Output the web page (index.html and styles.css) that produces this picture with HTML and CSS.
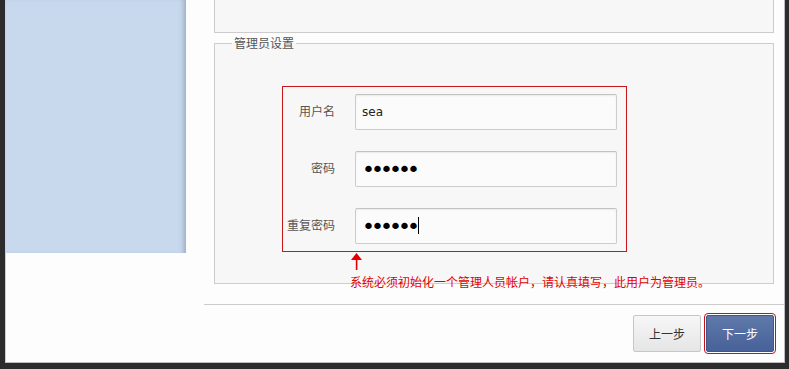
FILE: index.html
```html
<!DOCTYPE html>
<html lang="zh-CN">
<head>
<meta charset="UTF-8">
<meta name="viewport" content="width=device-width, initial-scale=1.0">
<link rel="stylesheet" href="styles.css">
</head>
<body>

<div class="frame">
  <aside class="sidebar"></aside>
  <main class="main">
    <div class="panel panel-top"></div>

    <fieldset class="panel admin">
      <legend>管理员设置</legend>
      <div class="account">
        <div class="row">
          <label for="username">用户名</label>
          <input type="text" id="username" value="sea">
        </div>
        <div class="row">
          <label for="password">密码</label>
          <input type="password" id="password" class="pass" value="123456">
        </div>
        <div class="row">
          <label for="password2">重复密码</label>
          <input type="password" id="password2" class="pass" value="123456">
          <span class="caret"></span>
        </div>
        <div class="hint">
          <svg class="arrow" width="11" height="17" viewBox="0 0 11 17">
            <polygon points="5.5,0 11,7 0,7" fill="#e00000"/>
            <rect x="4.8" y="7" width="1.6" height="10" fill="#e00000"/>
          </svg>
          <p>系统必须初始化一个管理人员帐户，请认真填写，此用户为管理员。</p>
        </div>
      </div>
    </fieldset>

    <div class="actions">
      <button class="btn">上一步</button>
      <button class="btn btn-primary">下一步</button>
    </div>
  </main>
</div>

</body>
</html>
```

FILE: styles.css
```css
html, body {
  height: 100%;
}
body {
  margin: 0;
  padding: 0 4px 6px 5px;
  box-sizing: border-box;
  background: #2c2c2c;
  font-family: "Noto Sans CJK SC", "DejaVu Sans", sans-serif;
  font-size: 12px;
  color: #555;
}
.frame {
  display: flex;
  height: 100%;
  box-sizing: border-box;
  background: #fdfdfd;
  border-left: 1px solid #cfcfcf;
  border-right: 1px solid #bdbdbd;
  border-bottom: 1px solid #bdbdbd;
}
.sidebar {
  width: 180px;
  height: 253px;
  flex-shrink: 0;
  background: #c8d9ee;
  box-shadow: inset -5px 0 5px -3px rgba(60, 80, 110, 0.35);
}
.main {
  flex: 1;
  padding-left: 18px;
  display: flex;
  flex-direction: column;
}
.panel {
  margin: 0 10px;
  border: 1px solid #cccccc;
  background: #f7f7f7;
}
.panel-top {
  height: 32px;
  border-top: 0;
}
.admin {
  margin-top: 3px;
  padding: 36px 0 31px 17px;
  min-width: 0;
}
.admin legend {
  padding: 0 2px;
  line-height: 14px;
  color: #555;
}
.account {
  position: relative;
  margin-left: 50px;
  width: 334px;
  padding: 7px 9px 7px 0;
  border: 1px solid #c8161c;
  display: flex;
  flex-direction: column;
  gap: 21px;
}
.row {
  position: relative;
  display: flex;
  align-items: center;
}
.row label {
  width: 52px;
  margin-right: 20px;
  margin-bottom: 4px;
  text-align: right;
  color: #555;
}
.row input {
  width: 262px;
  height: 36px;
  box-sizing: border-box;
  padding: 0 6px;
  border: 1px solid #cccccc;
  border-top-color: #c2c2c2;
  border-radius: 2px;
  background: #fbfbfb;
  box-shadow: inset 0 1px 2px rgba(0, 0, 0, 0.07);
  font-family: "DejaVu Sans", sans-serif;
  font-size: 12px;
  color: #222;
}
.row input:focus {
  outline: none;
}
.row .pass {
  font-size: 22px;
  letter-spacing: -4px;
  color: #000;
}
.caret {
  position: absolute;
  left: 135px;
  top: 9px;
  width: 1px;
  height: 17px;
  background: #000;
}
.hint {
  position: absolute;
  top: 100%;
  left: 67px;
  margin-top: 1px;
  white-space: nowrap;
}
.arrow {
  display: block;
  margin: 1px 0 0 1px;
}
.hint p {
  margin: 5px 0 0;
  line-height: 14px;
  color: #e00000;
}
.actions {
  margin-top: 20px;
  border-top: 1px solid #cccccc;
  padding: 10px 10px 0;
  display: flex;
  justify-content: flex-end;
  gap: 5px;
}
.btn {
  width: 68px;
  height: 37px;
  border: 1px solid #c6c6c6;
  border-radius: 2px;
  background: linear-gradient(#f7f7f7, #e5e5e5);
  font-family: "Noto Sans CJK SC", sans-serif;
  font-size: 12px;
  color: #333;
  cursor: pointer;
}
.btn-primary {
  border-color: #3f5788;
  background: linear-gradient(#6079a9, #47619a);
  color: #fff;
  outline: 1px solid #c0141c;
  outline-offset: 1px;
}
```
